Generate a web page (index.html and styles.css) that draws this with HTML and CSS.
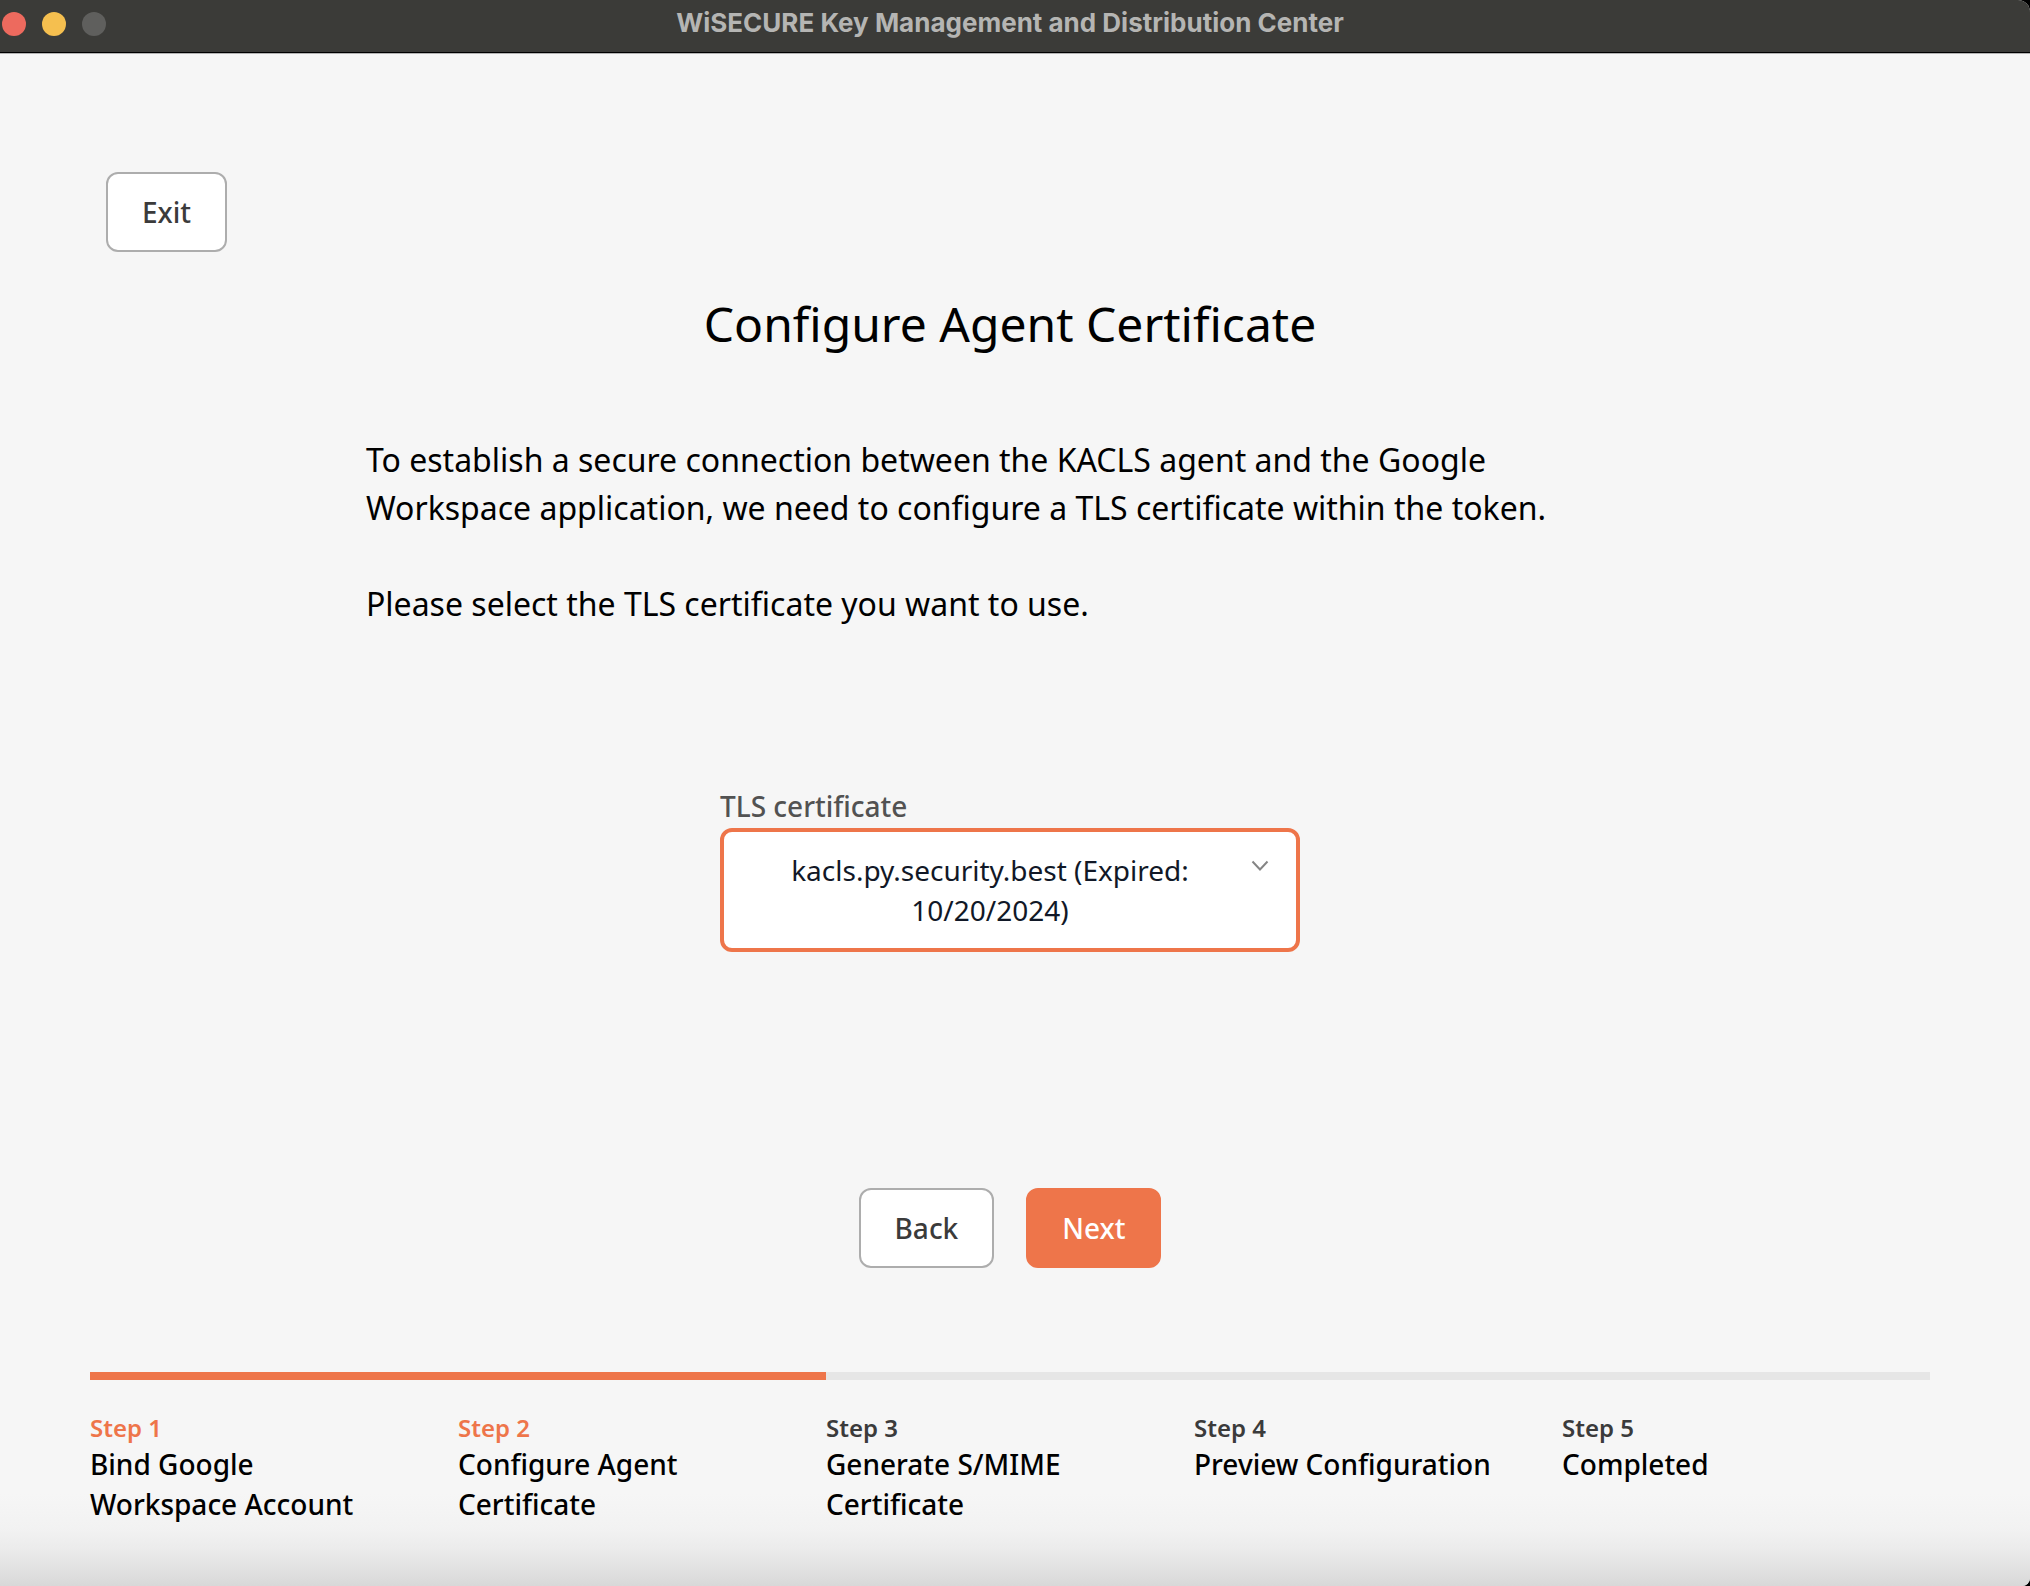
FILE: index.html
```html
<!DOCTYPE html>
<html lang="en">
<head>
  <meta charset="utf-8">
  <meta name="viewport" content="width=device-width, initial-scale=1">
  <title>WiSECURE Key Management and Distribution Center</title>
  <link rel="stylesheet" href="styles.css">
</head>
<body>
  <div class="window">
    <header class="titlebar">
      <div class="lights">
        <button class="light light-close" type="button" aria-label="Close"></button>
        <button class="light light-minimize" type="button" aria-label="Minimize"></button>
        <button class="light light-zoom" type="button" aria-label="Zoom" disabled></button>
      </div>
      <span class="titlebar-text">WiSECURE Key Management and Distribution Center</span>
    </header>

    <div class="page">
      <div class="toolbar">
        <button class="btn" type="button">Exit</button>
      </div>

      <main class="content">
        <h1 class="heading">Configure Agent Certificate</h1>
        <div class="intro">
          <p>To establish a secure connection between the KACLS agent and the Google Workspace application, we need to configure a TLS certificate within the token.</p>
          <p>Please select the TLS certificate you want to use.</p>
        </div>
        <div class="field">
          <label class="field-label" for="certificate">TLS certificate</label>
          <select class="select" id="certificate">
            <button class="select-button">
              <selectedcontent class="select-value"></selectedcontent>
              <svg class="chevron" viewBox="0 0 20 20" aria-hidden="true"><path d="M2.5 5.5 L10 13.5 L17.5 5.5"/></svg>
            </button>
            <option selected>kacls.py.security.best (Expired: 10/20/2024)</option>
          </select>
        </div>
        <div class="actions">
          <button class="btn btn-wide" type="button">Back</button>
          <button class="btn btn-wide btn-primary" type="button">Next</button>
        </div>
      </main>

      <footer class="steps">
        <progress class="progress" max="5" value="2" aria-label="Setup progress"></progress>
        <ol class="step-list">
          <li class="step step-done"><span class="step-number">Step 1</span><span class="step-name">Bind Google Workspace Account</span></li>
          <li class="step step-done"><span class="step-number">Step 2</span><span class="step-name">Configure Agent Certificate</span></li>
          <li class="step"><span class="step-number">Step 3</span><span class="step-name">Generate S/MIME Certificate</span></li>
          <li class="step"><span class="step-number">Step 4</span><span class="step-name">Preview Configuration</span></li>
          <li class="step"><span class="step-number">Step 5</span><span class="step-name">Completed</span></li>
        </ol>
      </footer>
    </div>
  </div>
</body>
</html>
```

FILE: styles.css
```css
:root {
  --accent: #ee754a;
  --surface: #f6f6f6;
  --border: #adadad;
  --ink: #3b3b3b;
}

* {
  box-sizing: border-box;
}

body {
  margin: 0;
  background: #000;
  color: #000;
  font-family: "Noto Sans", "Open Sans", sans-serif;
  font-weight: 400;
}

.window {
  display: flex;
  flex-direction: column;
  min-height: 100vh;
  overflow: hidden;
  border-radius: 0 12px 8px 0;
  background: var(--surface);
}

/* Title bar */
.titlebar {
  display: grid;
  grid-template-columns: 1fr auto 1fr;
  align-items: center;
  height: 54px;
  padding: 0 12px 6px 2px;
  border-bottom: 1px solid #b4b4b4;
  background: #3b3b38;
  box-shadow: inset 0 -1px #000;
}

.lights {
  display: flex;
  gap: 16px;
}

.light {
  width: 24px;
  height: 24px;
  padding: 0;
  border: 0;
  border-radius: 50%;
}

.light-close {
  background: #ed6a5e;
}

.light-minimize {
  background: #f5bf4f;
}

.light-zoom {
  background: #5f5f5d;
}

.titlebar-text {
  padding-bottom: 2px;
  color: #b5b5b3;
  font-family: Inter, Roboto, sans-serif;
  font-optical-sizing: none;
  font-size: 26px;
  font-weight: 700;
  line-height: 32px;
}

/* Page */
.page {
  flex: 1;
  display: flex;
  flex-direction: column;
  padding: 118px 100px 62px 90px;
  background: linear-gradient(to top, #d8d8d8, #e2e2e2 18px, #ebebeb 36px, #f2f2f2 58px, transparent 92px);
}

.toolbar {
  padding-left: 16px;
}

.btn {
  height: 80px;
  padding: 0 34px;
  border: 2px solid var(--border);
  border-radius: 12px;
  background: #fff;
  color: var(--ink);
  font: inherit;
  font-size: 28px;
  font-weight: 500;
  line-height: 40px;
}

.btn-wide {
  min-width: 135px;
}

.btn-primary {
  border-color: var(--accent);
  background: var(--accent);
  color: #fff;
}

.content {
  display: flex;
  flex-direction: column;
  align-items: center;
  padding-top: 36px;
}

.heading {
  margin: 0;
  font-size: 48px;
  font-weight: 400;
  line-height: 72px;
}

.intro {
  display: grid;
  gap: 48px;
  width: 100%;
  max-width: 1288px;
  padding: 76px 0 158px;
}

.intro p {
  max-width: 1200px;
  margin: 0;
  font-size: 32px;
  line-height: 48px;
}

.field {
  display: flex;
  flex-direction: column;
  gap: 2px;
  width: 100%;
  max-width: 580px;
}

.field-label {
  color: #525252;
  font-size: 28px;
  font-weight: 500;
  line-height: 40px;
}

.select,
.select::picker(select) {
  appearance: base-select;
}

.select {
  display: block;
  width: 100%;
  min-height: 124px;
  padding: 18px 26px;
  border: 4px solid var(--accent);
  border-radius: 12px;
  background: #fff;
  color: #111827;
  font: inherit;
  font-size: 28px;
  line-height: 40px;
  white-space: normal;
}

.select::picker-icon {
  display: none;
}

.select-button {
  display: flex;
  gap: 20px;
  width: 100%;
}

.select-value {
  flex: 1;
  text-align: center;
}

.chevron {
  flex: none;
  width: 20px;
  height: 20px;
  margin-top: 6px;
  fill: none;
  stroke: #858585;
  stroke-width: 2;
}

.actions {
  display: flex;
  gap: 32px;
  padding: 236px 0 104px;
}

/* Steps */
.steps {
  margin-top: auto;
}

.progress {
  display: block;
  width: 100%;
  height: 8px;
  border: 0;
  appearance: none;
  background: #e6e6e6;
}

.progress::-webkit-progress-bar {
  background: #e6e6e6;
}

.progress::-webkit-progress-value {
  background: var(--accent);
}

.step-list {
  display: grid;
  grid-template-columns: repeat(5, 1fr);
  margin: 0;
  padding: 32px 0 0;
  list-style: none;
}

.step {
  display: flex;
  flex-direction: column;
  padding-right: 64px;
}

.step-number {
  color: var(--ink);
  font-size: 24px;
  font-weight: 600;
  line-height: 32px;
}

.step-done .step-number {
  color: var(--accent);
}

.step-name {
  font-size: 28px;
  font-weight: 500;
  line-height: 40px;
}
```
